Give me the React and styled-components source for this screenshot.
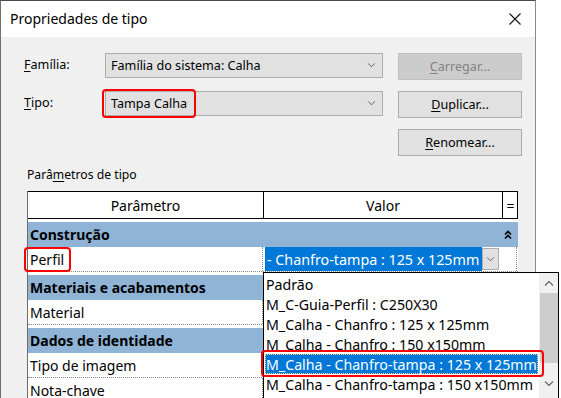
import React from "react";
import styled, { createGlobalStyle } from "styled-components";

const GlobalStyle = createGlobalStyle`
  html, body {
    margin: 0;
    padding: 0;
    background: #fff;
  }
  body {
    font-family: "Noto Sans", "Open Sans", sans-serif;
    font-size: 14px;
    color: #000;
  }
`;

const Screen = styled.div`
  width: 561px;
  height: 398px;
  overflow: hidden;
  background: #fff;
`;

const Window = styled.div`
  width: 536px;
  height: 100%;
  box-sizing: border-box;
  border-top: 1px solid #4a4a4a;
  border-left: 1px solid #707070;
  border-right: 1px solid #8a8a8a;
  display: flex;
  flex-direction: column;
`;

const TitleBar = styled.div`
  height: 36px;
  flex: none;
  background: #fff;
  display: flex;
  align-items: center;
  justify-content: space-between;
  padding: 0 14px 0 9px;
`;

const Title = styled.span`
  font-size: 14px;
  line-height: 20px;
`;

const Body = styled.div`
  flex: 1;
  background: #f0f0f0;
  padding: 16px 0 0 23px;
  display: flex;
  flex-direction: column;
`;

const Form = styled.div`
  display: grid;
  grid-template-columns: 81px 278px 139px;
  row-gap: 11px;
  align-items: start;
  font-size: 12.6px;
`;

const Label = styled.span`
  line-height: 24px;
`;

const Key = styled.span`
  text-decoration: underline;
  text-underline-offset: 2px;
`;

const Combo = styled.div`
  position: relative;
  height: 25px;
  box-sizing: border-box;
  background: #e1e1e1;
  border: 1px solid #adadad;
  display: flex;
  align-items: center;
  justify-content: space-between;
  padding: 0 6px 0 5px;
  line-height: 20px;
`;

const Button = styled.div`
  grid-column: 3;
  margin-left: 15px;
  height: 27px;
  box-sizing: border-box;
  border: 1px solid ${(p) => (p.disabled ? "#bfbfbf" : "#adadad")};
  background: ${(p) => (p.disabled ? "#cccccc" : "#e1e1e1")};
  color: ${(p) => (p.disabled ? "#838383" : "#000")};
  display: flex;
  align-items: center;
  justify-content: center;
  line-height: 20px;
`;

const Mark = styled.span`
  position: relative;
  &::after {
    content: "";
    position: absolute;
    left: ${(p) => p.l}px;
    right: ${(p) => p.r}px;
    top: ${(p) => p.t}px;
    bottom: ${(p) => p.b}px;
    border: 2.5px solid #f00;
    border-radius: 4px;
    pointer-events: none;
  }
`;

const SectionLabel = styled.div`
  margin: 9px 0 0 3px;
  line-height: 20px;
  font-size: 12.2px;
`;

const Table = styled.div`
  position: relative;
  margin: 6px 0 0 3px;
  width: 491px;
  flex: 1;
  box-sizing: border-box;
  background: #fff;
  border-left: 1px solid #6d6d6d;
  display: flex;
  flex-direction: column;
`;

const HeaderRow = styled.div`
  display: grid;
  grid-template-columns: 235px 239px 16px;
  height: 28px;
  box-sizing: border-box;
  border-top: 1px solid #000;
  border-bottom: 1px solid #000;
  border-right: 1px solid #000;
`;

const HeadCell = styled.div`
  display: flex;
  align-items: center;
  justify-content: center;
  font-size: 14px;
  border-left: ${(p) => (p.first ? "none" : "1px solid #000")};
`;

const GroupRow = styled.div`
  margin-top: 3px;
  height: 25px;
  background: #8fb4d6;
  display: flex;
  align-items: center;
  justify-content: space-between;
  padding: 0 6px 0 2px;
  font-weight: 700;
`;

const DataRow = styled.div`
  display: grid;
  grid-template-columns: 235px 254px;
  height: 25px;
  box-sizing: border-box;
  border-bottom: 1px dotted #8a8a8a;
`;

const NameCell = styled.div`
  display: flex;
  align-items: center;
  padding-left: 2px;
  border-right: 1px dotted #8a8a8a;
`;

const ValueCell = styled.div`
  display: flex;
  align-items: stretch;
  padding: 0 17px 0 2px;
  border-right: 1px dotted #8a8a8a;
`;

const SelectedValue = styled.div`
  flex: 1;
  background: #0078d7;
  color: #fff;
  display: flex;
  align-items: center;
  padding-left: 2px;
  white-space: nowrap;
  overflow: hidden;
  font-size: 14.3px;
`;

const DropButton = styled.div`
  width: 17px;
  height: 22px;
  box-sizing: border-box;
  margin-top: 1px;
  background: #e1e1e1;
  border: 1px solid #adadad;
  display: flex;
  align-items: center;
  justify-content: center;
`;

const DropList = styled.div`
  position: absolute;
  left: 235px;
  top: 81px;
  width: 296px;
  height: 130px;
  box-sizing: border-box;
  background: #fff;
  border: 1px solid #000;
  display: flex;
`;

const Items = styled.div`
  flex: 1;
  padding-top: 1px;
  display: flex;
  flex-direction: column;
`;

const Item = styled.div`
  position: relative;
  height: 20px;
  margin: 0 1px 0 1px;
  padding-left: 1px;
  display: flex;
  align-items: center;
  white-space: nowrap;
  font-size: 14.2px;
  background: ${(p) => (p.selected ? "#0078d7" : "transparent")};
  color: ${(p) => (p.selected ? "#fff" : "#000")};
  outline: ${(p) => (p.selected ? "1px dotted #ffd27f" : "none")};
  outline-offset: -1px;
  ${(p) =>
    p.selected &&
    `&::after {
      content: "";
      position: absolute;
      left: -4px;
      right: -6px;
      top: -4px;
      bottom: -3px;
      border: 2.5px solid #f00;
      border-radius: 4px;
    }`}
`;

const ScrollBar = styled.div`
  width: 19px;
  background: #f0f0f0;
  display: flex;
  flex-direction: column;
`;

const ScrollArrow = styled.div`
  height: 20px;
  display: flex;
  align-items: center;
  justify-content: center;
`;

const Thumb = styled.div`
  height: 70px;
  margin: 0 0 0 1px;
  background: #cdcdcd;
`;

const Track = styled.div`
  height: 11px;
`;

const Chevron = ({ up, color = "#444", w = 10, h = 6 }) => (
  <svg width={w} height={h} viewBox="0 0 10 6">
    <path
      d={up ? "M1 5.5 L5 1.5 L9 5.5" : "M1 0.5 L5 4.5 L9 0.5"}
      fill="none"
      stroke={color}
      strokeWidth="1.1"
    />
  </svg>
);

const CloseIcon = () => (
  <svg width="12" height="12" viewBox="0 0 12 12">
    <path d="M0.5 0.5 L11.5 11.5 M11.5 0.5 L0.5 11.5" stroke="#111" strokeWidth="1.1" />
  </svg>
);

const Collapse = () => (
  <svg width="8" height="10" viewBox="0 0 8 10">
    <path d="M1 4.5 L4 1.5 L7 4.5 M1 8.5 L4 5.5 L7 8.5" fill="none" stroke="#000" strokeWidth="1.6" />
  </svg>
);

const options = [
  "Padrão",
  "M_C-Guia-Perfil : C250X30",
  "M_Calha - Chanfro : 125 x 125mm",
  "M_Calha - Chanfro : 150 x150mm",
  "M_Calha - Chanfro-tampa : 125 x 125mm",
  "M_Calha - Chanfro-tampa : 150 x150mm",
];

const App = () => {
  return (
    <Screen>
      <GlobalStyle />
      <Window>
        <TitleBar>
          <Title>Propriedades de tipo</Title>
          <CloseIcon />
        </TitleBar>
        <Body>
          <Form>
            <Label>
              <Key>F</Key>amília:
            </Label>
            <Combo>
              <span>Família do sistema: Calha</span>
              <Chevron w={9} h={5} color="#555" />
            </Combo>
            <Button disabled>
              <span>
                <Key>C</Key>arregar...
              </span>
            </Button>

            <Label>
              <Key>T</Key>ipo:
            </Label>
            <Combo>
              <Mark l={-9} r={-9} t={-5} b={-4}>
                Tampa Calha
              </Mark>
              <Chevron w={9} h={5} color="#555" />
            </Combo>
            <Button>
              <span>
                <Key>D</Key>uplicar...
              </span>
            </Button>

            <Button>
              <span>
                <Key>R</Key>enomear...
              </span>
            </Button>
          </Form>

          <SectionLabel>
            Parâ<Key>m</Key>etros de tipo
          </SectionLabel>

          <Table>
            <HeaderRow>
              <HeadCell first>Parâmetro</HeadCell>
              <HeadCell>Valor</HeadCell>
              <HeadCell>=</HeadCell>
            </HeaderRow>

            <GroupRow>
              <span>Construção</span>
              <Collapse />
            </GroupRow>
            <DataRow>
              <NameCell>
                <Mark l={-6} r={-7} t={-3} b={-3}>
                  Perfil
                </Mark>
              </NameCell>
              <ValueCell>
                <SelectedValue>- Chanfro-tampa : 125 x 125mm</SelectedValue>
                <DropButton>
                  <Chevron w={9} h={5} color="#555" />
                </DropButton>
              </ValueCell>
            </DataRow>

            <GroupRow>
              <span>Materiais e acabamentos</span>
            </GroupRow>
            <DataRow>
              <NameCell>Material</NameCell>
              <ValueCell />
            </DataRow>

            <GroupRow>
              <span>Dados de identidade</span>
            </GroupRow>
            <DataRow>
              <NameCell>Tipo de imagem</NameCell>
              <ValueCell />
            </DataRow>
            <DataRow>
              <NameCell>Nota-chave</NameCell>
              <ValueCell />
            </DataRow>

            <DropList>
              <Items>
                {options.map((o, i) => (
                  <Item key={o} selected={i === 4}>
                    {o}
                  </Item>
                ))}
              </Items>
              <ScrollBar>
                <ScrollArrow>
                  <Chevron up w={10} h={6} color="#606060" />
                </ScrollArrow>
                <Thumb />
                <Track />
                <ScrollArrow>
                  <Chevron w={10} h={6} color="#606060" />
                </ScrollArrow>
              </ScrollBar>
            </DropList>
          </Table>
        </Body>
      </Window>
    </Screen>
  );
};

export default App;
